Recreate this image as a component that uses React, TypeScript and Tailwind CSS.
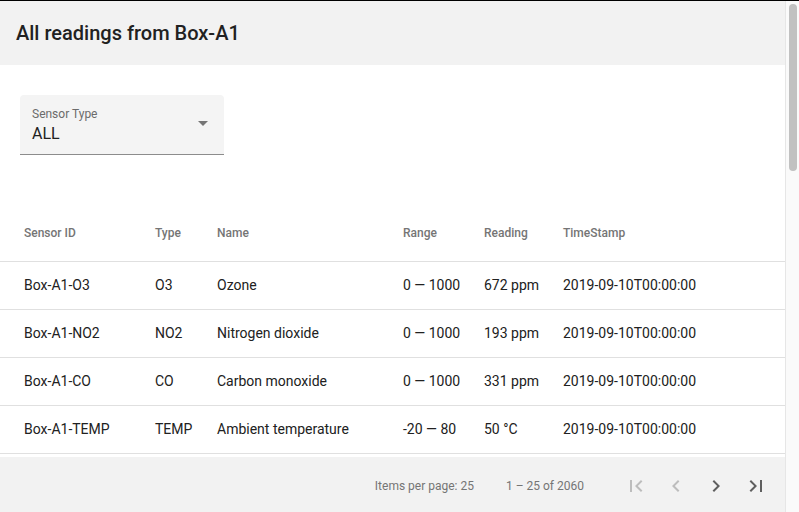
import React from "react"

interface Reading {
	id: string
	type: string
	name: string
	range: string
	value: string
	timestamp: string
}

const readings: Reading[] = [
	{ id: "Box-A1-O3", type: "O3", name: "Ozone", range: "0 — 1000", value: "672 ppm", timestamp: "2019-09-10T00:00:00" },
	{ id: "Box-A1-NO2", type: "NO2", name: "Nitrogen dioxide", range: "0 — 1000", value: "193 ppm", timestamp: "2019-09-10T00:00:00" },
	{ id: "Box-A1-CO", type: "CO", name: "Carbon monoxide", range: "0 — 1000", value: "331 ppm", timestamp: "2019-09-10T00:00:00" },
	{ id: "Box-A1-TEMP", type: "TEMP", name: "Ambient temperature", range: "-20 — 80", value: "50 °C", timestamp: "2019-09-10T00:00:00" },
]

const cols = "grid grid-cols-[131px_62px_186px_81px_79px_1fr] items-center pl-6"

function PagerIcon({ d, disabled }: { d: string; disabled?: boolean }) {
	return (
		<button
			className={
				"w-10 h-10 flex items-center justify-center " +
				(disabled ? "text-[#bdbdbd]" : "text-[#5f5f5f]")
			}
		>
			<svg width="24" height="24" viewBox="0 0 24 24" fill="currentColor">
				<path d={d} />
			</svg>
		</button>
	)
}

export default function App() {
	return (
		<div className="h-[512px] w-[799px] overflow-hidden flex flex-col bg-white font-['Roboto','Liberation_Sans',sans-serif]">
			<div className="h-px bg-black shrink-0" />
			<div className="flex flex-1 min-h-0">
				<div className="flex-1 flex flex-col min-w-0">
					{/* header */}
					<div className="h-16 shrink-0 bg-[#f2f2f2] flex items-center px-4">
						<h1 className="text-[20px] font-medium text-[#212121]">All readings from Box-A1</h1>
					</div>

					{/* select */}
					<div className="mt-[30px] ml-5 w-[204px] h-[60px] shrink-0 bg-[#f4f4f4] rounded-t border-b border-[#8c8c8c] flex items-start px-3 pt-3">
						<div className="flex-1">
							<div className="text-[12px] leading-[14px] text-[#6b6b6b]">Sensor Type</div>
							<div className="text-[16px] leading-5 mt-[3px] text-[#212121]">ALL</div>
						</div>
						<div className="mt-[14px] mr-[4px] w-0 h-0 border-l-[5px] border-r-[5px] border-t-[5px] border-l-transparent border-r-transparent border-t-[#757575]" />
					</div>

					{/* table */}
					<div className="mt-[50px] shrink-0">
						<div className={cols + " h-[57px] border-b border-[#e0e0e0] text-[12px] font-medium text-[#757575]"}>
							<span>Sensor ID</span>
							<span>Type</span>
							<span>Name</span>
							<span>Range</span>
							<span>Reading</span>
							<span>TimeStamp</span>
						</div>
						{readings.map(r => (
							<div key={r.id} className={cols + " h-12 border-b border-[#e0e0e0] text-[14px] text-[#212121]"}>
								<span>{r.id}</span>
								<span>{r.type}</span>
								<span>{r.name}</span>
								<span>{r.range}</span>
								<span>{r.value}</span>
								<span>{r.timestamp}</span>
							</div>
						))}
					</div>

					<div className="h-[3px] shrink-0" />

					{/* paginator */}
					<div className="h-14 shrink-0 bg-[#f2f2f2] flex items-center justify-end pt-[2px] pr-[9px] text-[12px] text-[#757575]">
						<span>Items per page: 25</span>
						<span className="ml-8 mr-8">1 – 25 of 2060</span>
						<PagerIcon disabled d="M18.41 16.59L13.82 12l4.59-4.59L17 6l-6 6 6 6zM6 6h2v12H6z" />
						<PagerIcon disabled d="M15.41 7.41L14 6l-6 6 6 6 1.41-1.41L10.83 12z" />
						<PagerIcon d="M10 6L8.59 7.41 13.17 12l-4.58 4.59L10 18l6-6z" />
						<PagerIcon d="M5.59 7.41L10.18 12l-4.59 4.59L7 18l6-6-6-6zM16 6h2v12h-2z" />
					</div>
				</div>

				{/* scrollbar */}
				<div className="w-[14px] shrink-0 bg-[#fafafa] border-l border-[#e6e6e6] pt-[3px] pl-[3px]">
					<div className="w-2 h-[167px] rounded-full bg-[#c1c1c1]" />
				</div>
			</div>
		</div>
	)
}
